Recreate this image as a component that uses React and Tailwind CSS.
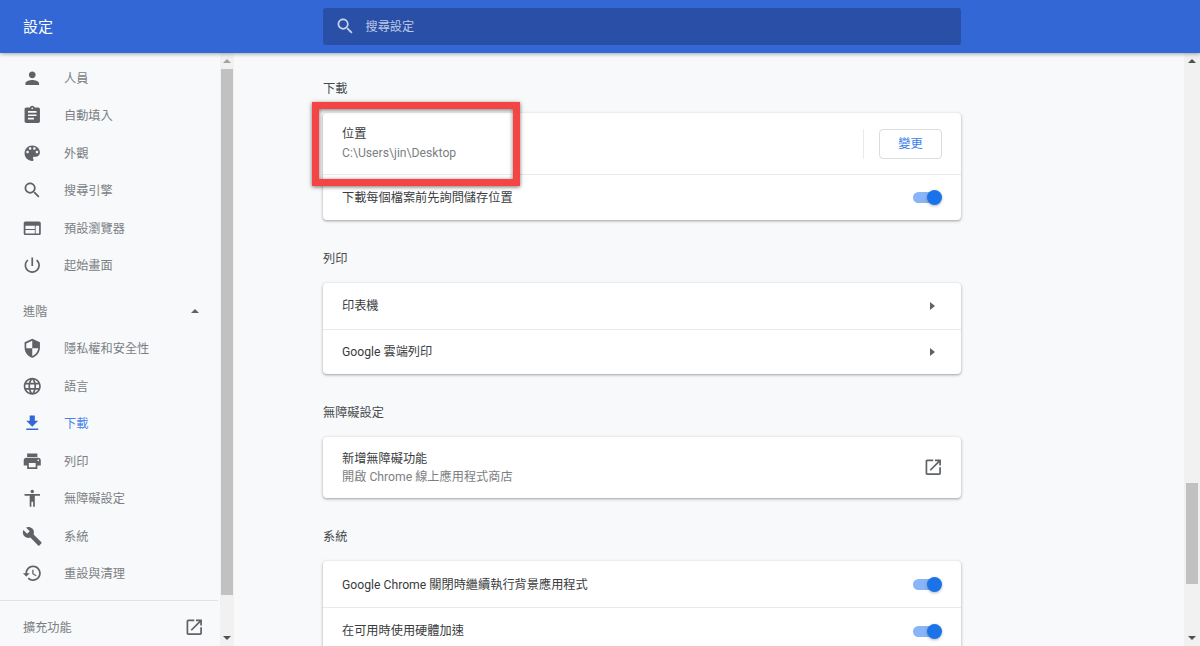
import React from "react";

const P = {
  person: "M12 12c2.21 0 4-1.79 4-4s-1.79-4-4-4-4 1.79-4 4 1.79 4 4 4zm0 2c-2.67 0-8 1.34-8 4v2h16v-2c0-2.66-5.33-4-8-4z",
  assignment: "M19 3h-4.18C14.4 1.84 13.3 1 12 1c-1.3 0-2.4.84-2.82 2H5c-1.1 0-2 .9-2 2v14c0 1.1.9 2 2 2h14c1.1 0 2-.9 2-2V5c0-1.1-.9-2-2-2zm-7 0c.55 0 1 .45 1 1s-.45 1-1 1-1-.45-1-1 .45-1 1-1zm2 14H7v-2h7v2zm3-4H7v-2h10v2zm0-4H7V7h10v2z",
  palette: "M12 3c-4.97 0-9 4.03-9 9s4.03 9 9 9c.83 0 1.5-.67 1.5-1.5 0-.39-.15-.74-.39-1.01-.23-.26-.38-.61-.38-.99 0-.83.67-1.5 1.5-1.5H16c2.76 0 5-2.24 5-5 0-4.42-4.03-8-9-8zm-5.5 9c-.83 0-1.5-.67-1.5-1.5S5.67 9 6.5 9 8 9.67 8 10.5 7.33 12 6.5 12zm3-4C8.67 8 8 7.33 8 6.5S8.67 5 9.5 5s1.5.67 1.5 1.5S10.33 8 9.5 8zm5 0c-.83 0-1.5-.67-1.5-1.5S13.67 5 14.5 5s1.5.67 1.5 1.5S15.33 8 14.5 8zm3 4c-.83 0-1.5-.67-1.5-1.5S16.67 9 17.5 9s1.5.67 1.5 1.5-.67 1.5-1.5 1.5z",
  search: "M15.5 14h-.79l-.28-.27C15.41 12.59 16 11.11 16 9.5 16 5.91 13.09 3 9.5 3S3 5.91 3 9.5 5.91 16 9.5 16c1.61 0 3.09-.59 4.23-1.57l.27.28v.79l5 4.99L20.49 19l-4.99-5zm-6 0C7.01 14 5 11.99 5 9.5S7.01 5 9.5 5 14 7.01 14 9.5 11.99 14 9.5 14z",
  web: "M20 4H4c-1.1 0-1.99.9-1.99 2L2 18c0 1.1.9 2 2 2h16c1.1 0 2-.9 2-2V6c0-1.1-.9-2-2-2zm-5 14H4v-4h11v4zm0-5H4V9h11v4zm5 5h-4V9h4v9z",
  power: "M13 3h-2v10h2V3zm4.83 2.17l-1.42 1.42C17.99 7.86 19 9.81 19 12c0 3.87-3.13 7-7 7s-7-3.13-7-7c0-2.19 1.01-4.14 2.58-5.42L6.17 5.17C4.23 6.82 3 9.26 3 12c0 4.97 4.03 9 9 9s9-4.03 9-9c0-2.74-1.23-5.18-3.17-6.83z",
  security: "M12 1L3 5v6c0 5.55 3.84 10.74 9 12 5.16-1.26 9-6.45 9-12V5l-9-4zm0 10.99h7c-.53 4.12-3.28 7.79-7 8.94V12H5V6.3l7-3.11v8.8z",
  language: "M11.99 2C6.47 2 2 6.48 2 12s4.47 10 9.99 10C17.52 22 22 17.52 22 12S17.52 2 11.99 2zm6.93 6h-2.95c-.32-1.25-.78-2.45-1.38-3.56 1.84.63 3.37 1.91 4.33 3.56zM12 4.04c.83 1.2 1.48 2.53 1.91 3.96h-3.82c.43-1.43 1.08-2.76 1.91-3.96zM4.26 14C4.1 13.36 4 12.69 4 12s.1-1.36.26-2h3.38c-.08.66-.14 1.32-.14 2 0 .68.06 1.34.14 2H4.26zm.82 2h2.95c.32 1.25.78 2.45 1.38 3.56-1.84-.63-3.37-1.9-4.33-3.56zm2.95-8H5.08c.96-1.66 2.49-2.93 4.33-3.56C8.81 5.55 8.35 6.75 8.03 8zM12 19.96c-.83-1.2-1.48-2.53-1.91-3.96h3.82c-.43 1.43-1.08 2.76-1.91 3.96zM14.34 14H9.66c-.09-.66-.16-1.32-.16-2 0-.68.07-1.35.16-2h4.68c.09.65.16 1.32.16 2 0 .68-.07 1.34-.16 2zm.25 5.56c.6-1.11 1.06-2.31 1.38-3.56h2.95c-.96 1.65-2.49 2.93-4.33 3.56zM16.36 14c.08-.66.14-1.32.14-2 0-.68-.06-1.34-.14-2h3.38c.16.64.26 1.31.26 2s-.1 1.36-.26 2h-3.38z",
  download: "M19 9h-4V3H9v6H5l7 7 7-7zM5 18v2h14v-2H5z",
  print: "M19 8H5c-1.66 0-3 1.34-3 3v6h4v4h12v-4h4v-6c0-1.66-1.34-3-3-3zm-3 11H8v-5h8v5zm3-7c-.55 0-1-.45-1-1s.45-1 1-1 1 .45 1 1-.45 1-1 1zm-1-9H6v4h12V3z",
  accessibility: "M12 2c1.1 0 2 .9 2 2s-.9 2-2 2-2-.9-2-2 .9-2 2-2zm9 7h-6v13h-2v-6h-2v6H9V9H3V7h18v2z",
  build: "M22.7 19l-9.1-9.1c.9-2.3.4-5-1.5-6.9-2-2-5-2.4-7.4-1.3L9 6 6 9 1.6 4.7C.4 7.1.9 10.1 2.9 12.1c1.9 1.9 4.6 2.4 6.9 1.5l9.1 9.1c.4.4 1 .4 1.4 0l2.3-2.3c.5-.4.5-1.1.1-1.4z",
  restore: "M13 3c-4.97 0-9 4.03-9 9H1l3.89 3.89.07.14L9 12H6c0-3.87 3.13-7 7-7s7 3.13 7 7-3.13 7-7 7c-1.93 0-3.68-.79-4.94-2.06l-1.42 1.42C8.27 19.99 10.51 21 13 21c4.97 0 9-4.03 9-9s-4.03-9-9-9zm-1 5v5l4.28 2.54.72-1.21-3.5-2.08V8H12z",
  open: "M19 19H5V5h7V3H5c-1.11 0-2 .9-2 2v14c0 1.1.89 2 2 2h14c1.1 0 2-.9 2-2v-7h-2v7zM14 3v2h3.59l-9.83 9.83 1.41 1.41L19 6.41V10h2V3h-7z",
};

function Icon({ d, className = "" }) {
  return (
    <svg viewBox="0 0 24 24" fill="currentColor" className={"shrink-0 w-[20.5px] h-[20.5px] " + className}>
      <path d={d} />
    </svg>
  );
}

function NavRow({ icon, label, active }) {
  return (
    <div className={"flex items-center shrink-0 h-[37.5px] pl-[21.75px] text-[12.2px] " + (active ? "text-[#4a83e8]" : "text-[#7b7f84]")}>
      <Icon d={icon} className={active ? "text-[#3367d6]" : "text-[#5f6368]"} />
      <span className="ml-[21.75px] pt-[2px]">{label}</span>
    </div>
  );
}

function Toggle() {
  return (
    <div className="relative w-[29px] h-[15px] flex items-center">
      <div className="w-[25px] h-[11px] rounded-full bg-[#8ab4f8]" />
      <div className="absolute right-0 top-0 w-[15px] h-[15px] rounded-full bg-[#1a73e8] shadow-[0_1px_3px_rgba(60,64,67,0.4)]" />
    </div>
  );
}

function ScrollArrow({ up, color = "border-[#505050]" }) {
  return (
    <div
      className={
        "w-0 h-0 border-x-[4px] border-x-transparent " +
        (up ? "border-b-[4px] " : "border-t-[4px] ") +
        color
      }
    />
  );
}

function Heading({ children, className = "" }) {
  return (
    <div className={"flex items-center h-[30px] pt-[2px] mb-[10px] text-[12.2px] text-[#46494d] " + className}>{children}</div>
  );
}

function Card({ children }) {
  return (
    <div className="bg-white rounded-[4px] shadow-[0_1px_2px_rgba(60,64,67,0.3),0_1px_3px_1px_rgba(60,64,67,0.15)]">
      {children}
    </div>
  );
}

function ToggleRow({ label, top, tall }) {
  return (
    <div className={"flex items-center justify-between pl-[19px] pr-[19px] text-[12.2px] text-[#3a3c40] " + (tall ? "h-[46px] pt-[1px] " : "h-[45.5px] ") + (top ? "border-t border-[#e8eaed]" : "")}>
      <span className={tall ? "pt-[1px]" : "pt-[1px]"}>{label}</span>
      <Toggle />
    </div>
  );
}

function ArrowRow({ label, top }) {
  return (
    <div className={"flex items-center justify-between h-[45.5px] pl-[19px] pr-[26px] text-[12.2px] text-[#3a3c40] " + (top ? "border-t border-[#e8eaed]" : "")}>
      <span>{label}</span>
      <div className="w-0 h-0 border-y-[4px] border-y-transparent border-l-[5px] border-l-[#5f6368]" />
    </div>
  );
}

export default function App() {
  return (
    <div className="relative flex flex-col h-[646px] w-[1200px] overflow-hidden bg-[#f8f9fa] [font-family:Roboto,'Noto_Sans_CJK_TC',sans-serif]">
      <header className="relative z-10 flex items-center h-[53px] shrink-0 bg-[#3367d6] shadow-[0_1px_4px_rgba(0,0,0,0.35)]">
        <div className="w-[323px] pl-[23px] pt-[2px] text-[15px] text-white">設定</div>
        <div className="flex items-center w-[638px] h-[37px] rounded-[3px] bg-[#2a4fa6] pl-[12px]">
          <Icon d={P.search} className="text-[#c6d2ee]" />
          <span className="ml-[10px] pt-[2px] text-[12.2px] text-[#bcc8e6]">搜尋設定</span>
        </div>
      </header>

      <div className="flex flex-1 min-h-0">
        <aside className="flex flex-col w-[220px] shrink-0 pt-[6px] overflow-hidden">
          <NavRow icon={P.person} label="人員" />
          <NavRow icon={P.assignment} label="自動填入" />
          <NavRow icon={P.palette} label="外觀" />
          <NavRow icon={P.search} label="搜尋引擎" />
          <NavRow icon={P.web} label="預設瀏覽器" />
          <NavRow icon={P.power} label="起始畫面" />
          <div className="flex items-center justify-between shrink-0 h-[37.5px] mt-[8px] pl-[23px] pr-[21px] text-[12.2px] text-[#7b7f84]">
            <span className="pt-[2px]">進階</span>
            <ScrollArrow up color="border-b-[#5f6368]" />
          </div>
          <NavRow icon={P.security} label="隱私權和安全性" />
          <NavRow icon={P.language} label="語言" />
          <NavRow icon={P.download} label="下載" active />
          <NavRow icon={P.print} label="列印" />
          <NavRow icon={P.accessibility} label="無障礙設定" />
          <NavRow icon={P.build} label="系統" />
          <NavRow icon={P.restore} label="重設與清理" />
          <div className="shrink-0 mt-[8px] mr-[2px] h-px bg-[#e0e2e5]" />
          <div className="flex items-center justify-between shrink-0 h-[52px] pl-[23px] pr-[15.5px] text-[12.2px] text-[#7b7f84]">
            <span className="pt-[2px]">擴充功能</span>
            <Icon d={P.open} className="text-[#5f6368]" />
          </div>
        </aside>

        <div className="flex flex-col items-center w-[14px] shrink-0 bg-[#f1f1f1] pr-[1px]">
          <div className="flex items-center justify-center h-[16px] shrink-0">
            <ScrollArrow up color="border-b-[#a3a3a3]" />
          </div>
          <div className="w-[12px] h-[526px] bg-[#c1c1c1] shrink-0" />
          <div className="flex-1" />
          <div className="flex items-center justify-center h-[16px] shrink-0">
            <ScrollArrow color="border-t-[#505050]" />
          </div>
        </div>

        <main className="flex-1 min-w-0 pl-[89px] pt-[20px]">
          <div className="w-[638px]">
            <Heading>下載</Heading>
            <Card>
              <div className="flex items-center justify-between h-[61px] pl-[19px] pr-[19px]">
                <div className="flex flex-col gap-[2.5px]">
                  <span className="text-[12.2px] leading-[16px] text-[#3a3c40]">位置</span>
                  <span className="text-[12.2px] leading-[16px] text-[#7d7f83]">C:\Users\jin\Desktop</span>
                </div>
                <div className="flex items-center">
                  <div className="w-px h-[30px] bg-[#e8eaed] mr-[15px]" />
                  <button className="flex items-center justify-center w-[63px] h-[30px] pt-[1px] rounded-[4px] border border-[#dadce0] bg-white text-[12.2px] text-[#3b7de8]">
                    變更
                  </button>
                </div>
              </div>
              <ToggleRow label="下載每個檔案前先詢問儲存位置" top />
            </Card>

            <Heading className="mt-[23.5px]">列印</Heading>
            <Card>
              <ArrowRow label="印表機" />
              <ArrowRow label="Google 雲端列印" top />
            </Card>

            <Heading className="mt-[23px]">無障礙設定</Heading>
            <Card>
              <div className="flex items-center justify-between h-[61px] pl-[19px] pr-[17.75px]">
                <div className="flex flex-col gap-[2.5px] pt-[1px]">
                  <span className="text-[12.2px] leading-[16px] text-[#3a3c40]">新增無障礙功能</span>
                  <span className="text-[12.2px] leading-[16px] text-[#7d7f83]">開啟 Chrome 線上應用程式商店</span>
                </div>
                <Icon d={P.open} className="text-[#5f6368]" />
              </div>
            </Card>

            <Heading className="mt-[23px]">系統</Heading>
            <Card>
              <ToggleRow label="Google Chrome 關閉時繼續執行背景應用程式" tall />
              <ToggleRow label="在可用時使用硬體加速" top tall />
            </Card>
          </div>
        </main>

        <div className="flex flex-col items-center w-[16px] shrink-0 bg-[#f1f1f1]">
          <div className="flex items-center justify-center h-[16px] shrink-0">
            <ScrollArrow up color="border-b-[#505050]" />
          </div>
          <div className="h-[414px] shrink-0" />
          <div className="w-[12px] h-[101px] bg-[#c1c1c1] shrink-0" />
          <div className="flex-1" />
          <div className="flex items-center justify-center h-[16px] shrink-0">
            <ScrollArrow color="border-t-[#505050]" />
          </div>
        </div>
      </div>

      {/* annotation drawn over the screenshot */}
      <div className="absolute z-20 left-[312px] top-[102px] w-[208px] h-[84px] border-[7px] border-[#f44444] shadow-[0_1px_4px_rgba(0,0,0,0.55),inset_0_1px_4px_rgba(0,0,0,0.55)]" />
    </div>
  );
}
